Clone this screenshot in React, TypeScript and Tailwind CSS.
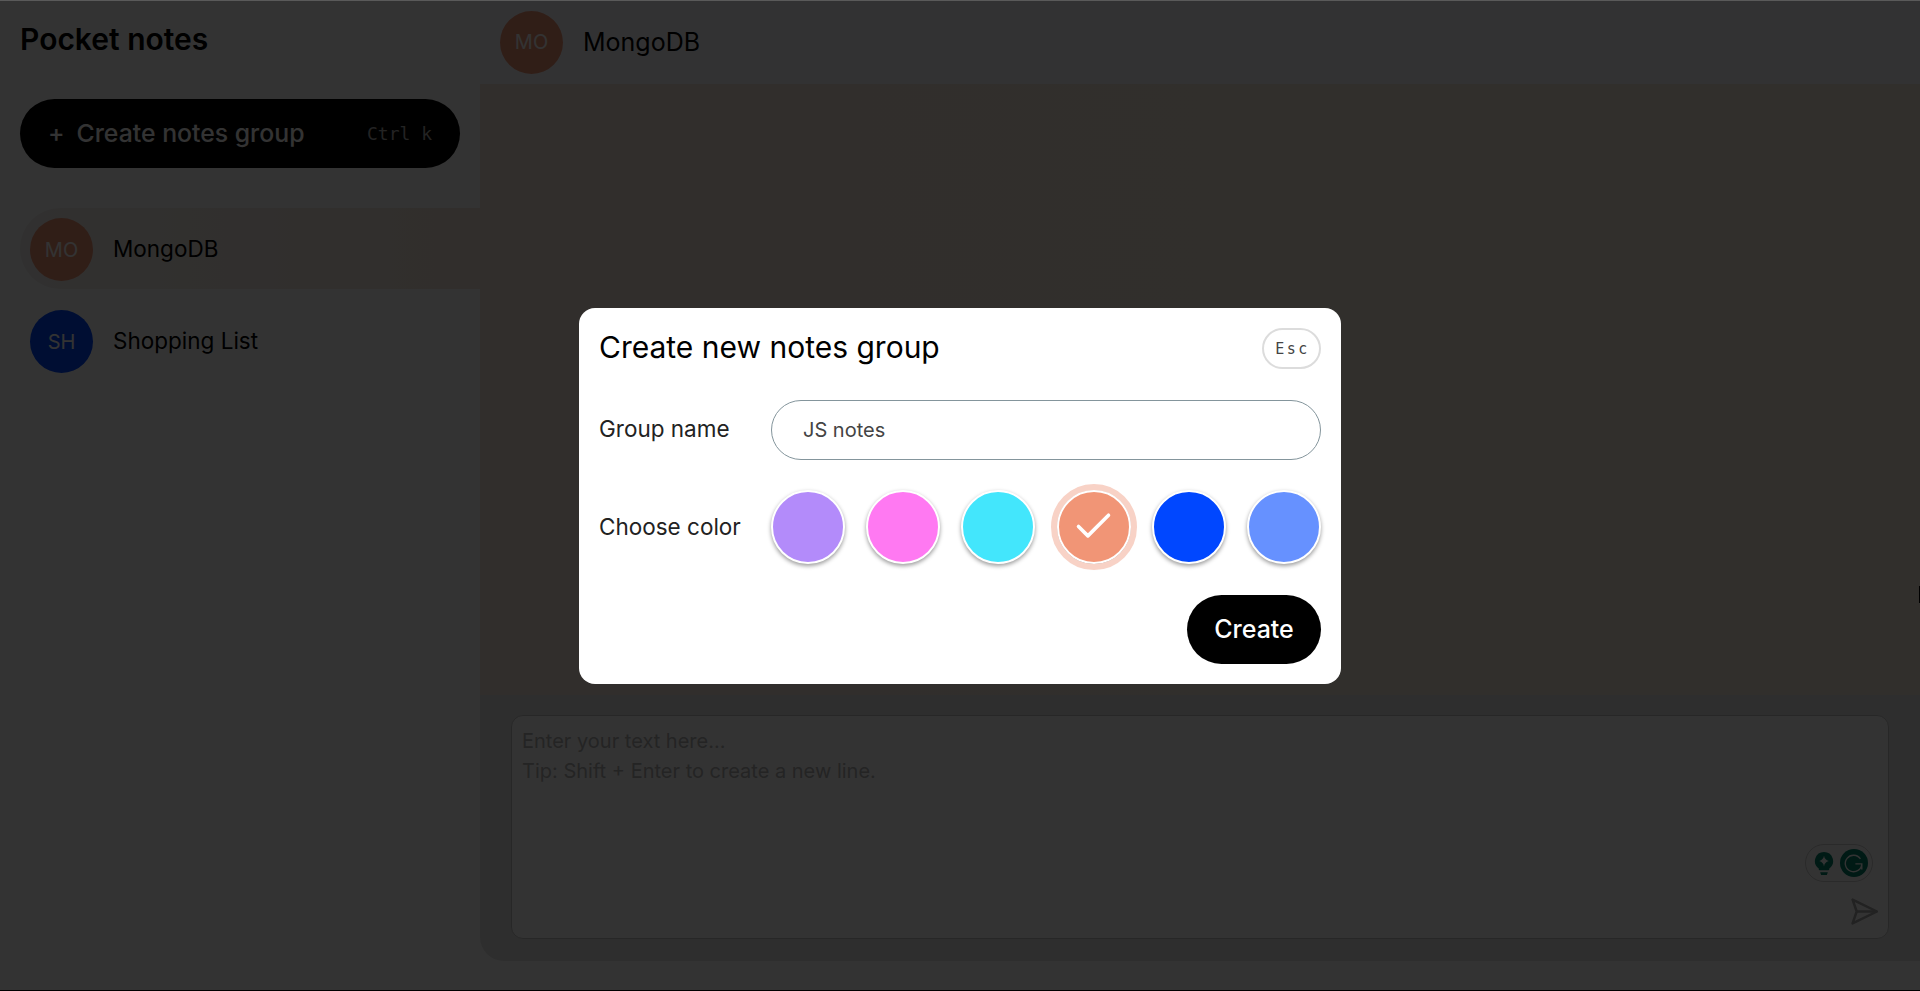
import { Check } from "lucide-react";

const groups = [
  { id: "mo", initials: "MO", name: "MongoDB", color: "bg-[#F19576]", active: true },
  { id: "sh", initials: "SH", name: "Shopping List", color: "bg-[#0047FF]", active: false },
];

const colors = [
  { id: "purple", bg: "bg-[#B38BFA]" },
  { id: "pink", bg: "bg-[#FF79F2]" },
  { id: "cyan", bg: "bg-[#43E6FC]" },
  { id: "orange", bg: "bg-[#F19576]", selected: true },
  { id: "blue", bg: "bg-[#0047FF]" },
  { id: "sky", bg: "bg-[#6691FF]" },
];

function Avatar({ initials, color }: { initials: string; color: string }) {
  return (
    <div className={`flex h-[63px] w-[63px] shrink-0 items-center justify-center rounded-full text-[20px] text-white ${color}`}>
      {initials}
    </div>
  );
}

function Sidebar() {
  return (
    <aside className="flex w-[480px] shrink-0 flex-col bg-white">
      <h1 className="pl-5 pt-[19px] pb-[1px] text-[30px] leading-[40px] font-semibold text-black">Pocket notes</h1>
      <button className="mx-5 mt-[39px] flex h-[69px] items-center justify-between rounded-full bg-black pl-7 pr-7 text-white">
        <span className="flex items-center gap-[12px] pt-[1px] text-[24.8px] font-medium">
          <span>+</span>
          <span>Create notes group</span>
        </span>
        <span className="font-['DejaVu_Sans_Mono',monospace] text-[18px] text-white/70">Ctrl k</span>
      </button>
      {/* Groups */}
      <div className="mt-10 flex flex-col gap-[11px] pl-5">
        {groups.map((group) => (
          <div
            key={group.id}
            className={`flex h-[81px] items-center gap-5 rounded-l-full pl-[10px] pt-[2px] ${group.active ? "bg-gradient-to-r from-[#f3f1ee] to-[#f4e6da]" : ""}`}
          >
            <Avatar initials={group.initials} color={group.color} />
            <span className="pb-[2px] text-[22.5px] text-black">{group.name}</span>
          </div>
        ))}
      </div>
    </aside>
  );
}

function ChatPane() {
  return (
    <main className="flex min-w-0 flex-1 flex-col bg-white">
      <header className="flex h-[84px] items-center gap-5 bg-[#fbfbff] pl-5">
        <Avatar initials="MO" color="bg-[#F19576]" />
        <span className="pt-[2px] text-[25px] text-black">MongoDB</span>
      </header>
      <div className="flex-1 bg-gradient-to-r from-[#f5e6da] to-[#f2eadc]" />
      <div className="h-[266px] rounded-bl-[24px] bg-[#e6e6e6] pl-[31px] pr-[31px] pt-5">
        <div className="relative h-[224px] rounded-[12px] border border-[#c4c4c4] bg-white px-[10px] py-[10px] text-[20px] leading-[30px] text-[#b4b4b4]">
          <p>Enter your text here...</p>
          <p>Tip: Shift + Enter to create a new line.</p>
          {/* Grammarly widget */}
          <div className="absolute right-[15px] top-[128px] flex h-[38px] w-[68px] items-center justify-between rounded-full border border-[#d0d0d0] pl-[8px] pr-[4px]">
            <svg viewBox="0 0 20 24" className="h-[23px] w-[20px]">
              <path
                fill="#00806a"
                d="M10 0a9.5 9.5 0 0 0-5.5 17.2V18a1 1 0 0 0 1 1h9a1 1 0 0 0 1-1v-.8A9.500 9.500 0 0 0 10 0zM6 21h8l-1 3H7z"
              />
              <path fill="#fff" d="M10 4c.6 3 2 4.500 5 5.500-3 1-4.400 2.500-5 5.500-.6-3-2-4.500-5-5.500 3-1 4.400-2.500 5-5.500z" />
            </svg>
            <div className="flex h-[28px] w-[28px] items-center justify-center rounded-full bg-[#00806a]">
              <svg viewBox="0 0 24 24" className="h-[22px] w-[22px]" fill="none" stroke="#fff" strokeWidth="1.500">
                <path d="M19 7.500A9 9 0 1 0 20.500 13H13.500M20.500 13v6" />
              </svg>
            </div>
          </div>
          {/* Send */}
          <svg viewBox="0 0 26 26" className="absolute right-[10px] top-[182px] h-[27px] w-[27px]" fill="none" stroke="#a8a8a8" strokeWidth="2.400" strokeLinejoin="round">
            <path d="M1.500 1.500 25 13 1.500 24.500 5.500 13z" />
            <path d="M5.500 13H25" />
          </svg>
        </div>
      </div>
      <div className="h-[30px]" />
    </main>
  );
}

function CreateGroupModal() {
  return (
    <div className="absolute inset-0 flex items-center justify-center bg-black/80">
      <div className="flex h-[376px] w-[762px] flex-col rounded-[16px] bg-white px-5 pt-5">
        <div className="flex items-start justify-between">
          <h2 className="text-[30px] leading-[38px] font-normal text-black">Create new notes group</h2>
          <span className="flex h-[41px] w-[59px] items-center justify-center rounded-full border-2 border-[#dcdcdc] pt-[3px] pl-[2px] font-['DejaVu_Sans_Mono',monospace] text-[15px] tracking-[2.5px] text-[#444]">
            Esc
          </span>
        </div>
        <div className="mt-[31px] flex items-center">
          <label className="w-[172px] pb-[2px] text-[22.5px] text-[#222]">Group name</label>
          <input
            readOnly
            value="JS notes"
            className="h-[60px] flex-1 rounded-full border border-[#84959c] px-[31px] text-[20px] text-[#444] outline-none"
          />
        </div>
        <div className="mt-[30px] flex items-center">
          <label className="w-[172px] text-[22.5px] text-[#222]">Choose color</label>
          <div className="flex flex-1 items-center justify-between">
            {colors.map((c) => (
              <div
                key={c.id}
                className={`flex h-[74px] w-[74px] items-center justify-center rounded-full border-2 border-white shadow-[0_2px_4px_rgba(0,0,0,0.4)] ${c.bg} ${c.selected ? "outline-[6px] outline-solid outline-[#f8d2c6]" : ""}`}
              >
                {c.selected && <Check className="h-[45px] w-[45px] text-white" strokeWidth={1.9} />}
              </div>
            ))}
          </div>
        </div>
        <div className="mt-[31px] flex justify-end">
          <button className="h-[69px] w-[134px] rounded-full bg-black pt-[2px] text-[25px] font-medium text-white">Create</button>
        </div>
      </div>
      {/* screenshot edge artefacts */}
      <div className="absolute inset-x-0 top-0 h-px bg-[#5a5a5a]" />
      <div className="absolute inset-x-0 bottom-0 h-px bg-black" />
      <div className="absolute right-0 top-[586px] h-[17px] w-px bg-black" />
    </div>
  );
}

export default function App() {
  return (
    <div className="relative flex h-[991px] w-[1920px] overflow-hidden font-['Inter',sans-serif]">
      <Sidebar />
      <ChatPane />
      <CreateGroupModal />
    </div>
  );
}
